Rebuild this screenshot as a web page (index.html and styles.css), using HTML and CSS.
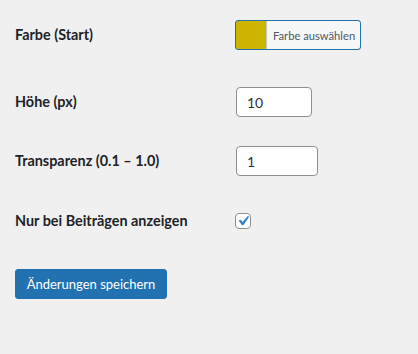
FILE: index.html
```html
<!DOCTYPE html>
<html lang="de">
<head>
<meta charset="utf-8">
<link rel="stylesheet" href="styles.css">
</head>
<body>
<form class="settings">
  <div class="row row-color">
    <div class="label">Farbe (Start)</div>
    <div class="field">
      <div class="color-result" role="button">
        <span class="color-text">Farbe auswählen</span>
      </div>
    </div>
  </div>
  <div class="row row-height">
    <div class="label">Höhe (px)</div>
    <div class="field"><input class="text-input small" type="text" value="10"></div>
  </div>
  <div class="row row-opacity">
    <div class="label">Transparenz (0.1 – 1.0)</div>
    <div class="field"><input class="text-input wide" type="text" value="1"></div>
  </div>
  <div class="row row-check">
    <div class="label">Nur bei Beiträgen anzeigen</div>
    <div class="field">
      <span class="checkbox">
        <svg viewBox="0 0 20 20" width="20" height="20" class="check"><path d="M14.83 4.89l1.34.94-5.81 8.38H9.02L5.78 9.67l1.34-1.25 2.57 2.4z" fill="#3582c4"/></svg>
      </span>
    </div>
  </div>
  <div class="submit">
    <button type="button" class="primary">Änderungen speichern</button>
  </div>
</form>
</body>
</html>
```
FILE: styles.css
```css
html, body {
  margin: 0;
  padding: 0;
  background: #f0f0f1;
}
body {
  font-family: "Lato", "Open Sans", sans-serif;
  color: #1d2327;
  width: 418px;
  height: 354px;
  overflow: hidden;
}
.settings {
  padding: 20px 15px 0 15px;
  display: flex;
  flex-direction: column;
}
.row {
  display: flex;
  align-items: center;
  height: 30px;
}
.row-height { margin-top: 37px; }
.row-opacity { margin-top: 29px; }
.row-check { margin-top: 30px; }
.label {
  width: 220px;
  font-size: 14.4px;
  font-weight: 700;
  line-height: 18px;
}
.field {
  display: flex;
  align-items: center;
}
.color-result {
  display: flex;
  height: 30px;
  width: 126px;
  padding: 0 0 0 30px;
  margin: 0;
  border: 1px solid #2271b1;
  border-radius: 3px;
  background: #ccb400;
  box-sizing: border-box;
  overflow: hidden;
  cursor: pointer;
}
.color-text {
  flex: 1;
  display: flex;
  align-items: center;
  white-space: nowrap;
  background: #f6f7f7;
  border-left: 1px solid #c3c4c7;
  padding: 0 0 0 6px;
  font-family: "Lato", "Open Sans", sans-serif;
  font-size: 11.2px;
  color: #50575e;
  border-radius: 0 2px 2px 0;
}
.text-input {
  height: 30px;
  box-sizing: border-box;
  border: 1px solid #8c8f94;
  border-radius: 4px;
  background: #fff;
  padding: 0 8px 0 10px;
  font-family: "Lato", "Open Sans", sans-serif;
  font-size: 14px;
  color: #2c3338;
  margin: 0 0 0 1px;
}
.text-input.small { width: 76px; }
.text-input.wide { width: 82px; }
.checkbox {
  position: relative;
  width: 16px;
  height: 16px;
  box-sizing: border-box;
  border: 1px solid #8c8f94;
  border-radius: 4px;
  background: #fff;
  display: block;
}
.check {
  position: absolute;
  left: -3px;
  top: -3px;
}
.submit {
  margin-top: 33px;
}
.primary {
  height: 30px;
  padding: 0 10px;
  border: 1px solid #2271b1;
  border-radius: 3px;
  background: #2271b1;
  color: #fff;
  font-family: "Lato", "Open Sans", sans-serif;
  font-size: 13px;
  width: 152px;
  cursor: pointer;
}
```
